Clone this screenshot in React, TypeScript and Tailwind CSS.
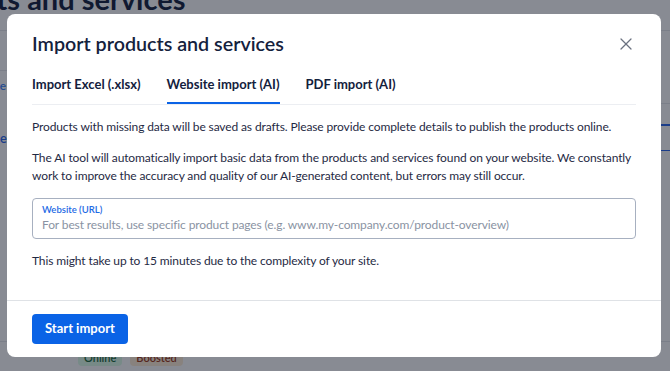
import { X } from 'lucide-react'

export default function App() {
    return (
        <div className="relative w-[670px] h-[371px] overflow-hidden bg-white font-['Lato',sans-serif]">
            {/* Page behind the dialog */}
            <div className="flex flex-col h-full">
                <h1 className="ml-[-95px] mt-[-19px] text-[29px] font-bold text-[#0f1b3a] leading-[36px] whitespace-nowrap">
                    Products and services
                </h1>
                <div className="mt-[13px] border-t border-[#e5e7eb]" />
                <div className="flex-1 flex">
                    <div className="w-[64px] border-r border-[#e5e7eb] flex flex-col">
                        <div className="h-[40px] border-b border-[#e5e7eb]" />
                        <div className="pt-[6px] ml-[-14px] text-[12px] text-[#3b82f6] font-semibold">Use</div>
                        <div className="mt-[34px] ml-[-20px] text-[13px] text-[#2563eb] font-semibold">Excel</div>
                    </div>
                    <div className="flex-1" />
                    <div className="w-[20px] flex flex-col">
                        <div className="h-[30px]" />
                        <div className="text-[11px] text-[#f59e0b] leading-[14px]">r</div>
                        <div className="mt-[28px] border-t border-[#e5e7eb]" />
                        <div className="mt-[20px] border-t-2 border-[#2563eb] pt-[2px] text-[13px] font-bold text-[#2563eb] leading-[22px]">In</div>
                        <div className="border-t border-[#2563eb]" />
                    </div>
                </div>
                <div className="h-[30px] border-t border-[#e5e7eb] flex items-end gap-[8px] pl-[78px] pb-[5px]">
                    <span className="px-[6px] rounded bg-[#dcfce7] text-[#166534] text-[11px] font-semibold leading-[16px]">Online</span>
                    <span className="px-[6px] rounded bg-[#ffedd5] text-[#9a3412] text-[11px] font-semibold leading-[16px]">Boosted</span>
                </div>
            </div>

            {/* Dialog overlay */}
            <div className="absolute inset-0 bg-[#111827]/50 flex items-start justify-start pt-[14px] pl-[7px]">
                <div className="w-[654px] h-[343px] bg-white rounded-[8px] flex flex-col">
                    <div className="px-[25px] pt-[18px] flex items-center justify-between">
                        <h2 className="text-[19.7px] font-semibold text-[#14213d] leading-[24px]">Import products and services</h2>
                        <X className="w-[20px] h-[20px] text-[#6b7280]" strokeWidth={1.5} />
                    </div>

                    <div className="mx-[25px] mt-[18px] flex gap-[26px] border-b border-[#eceef2] text-[13px] font-bold text-[#14213d]">
                        <div className="pb-[9px] pt-[1px]">Import Excel (.xlsx)</div>
                        <div className="pb-[7px] pt-[1px] border-b-2 border-[#0a63e6]">Website import (AI)</div>
                        <div className="pb-[9px] pt-[1px]">PDF import (AI)</div>
                    </div>

                    <div className="px-[25px] pt-[13px] text-[12px] tracking-[-0.12px] text-[#1f2a44] leading-[18px]">
                        <p>Products with missing data will be saved as drafts. Please provide complete details to publish the products online.</p>
                        <p className="mt-[13px]">
                            The AI tool will automatically import basic data from the products and services found on your website. We constantly work to improve the accuracy and quality of our AI-generated content, but errors may still occur.
                        </p>
                        <div className="mt-[13px] h-[41px] border border-[#a7b0c0] rounded-[4px] px-[9px] pt-[4px]">
                            <div className="text-[9.5px] tracking-normal leading-[13px] text-[#1d6ae5] font-semibold">Website (URL)</div>
                            <div className="text-[12px] leading-[18px] text-[#8a93a3]">
                                For best results, use specific product pages (e.g. www.my-company.com/product-overview)
                            </div>
                        </div>
                        <p className="mt-[13px]">This might take up to 15 minutes due to the complexity of your site.</p>
                    </div>

                    <div className="mt-auto border-t border-[#dfe2e6] px-[25px] pt-[13px] pb-[13px]">
                        <button className="h-[30px] px-[13px] rounded-[4px] bg-[#0a63e6] text-white text-[13px] font-bold">
                            Start import
                        </button>
                    </div>
                </div>
            </div>
        </div>
    )
}
